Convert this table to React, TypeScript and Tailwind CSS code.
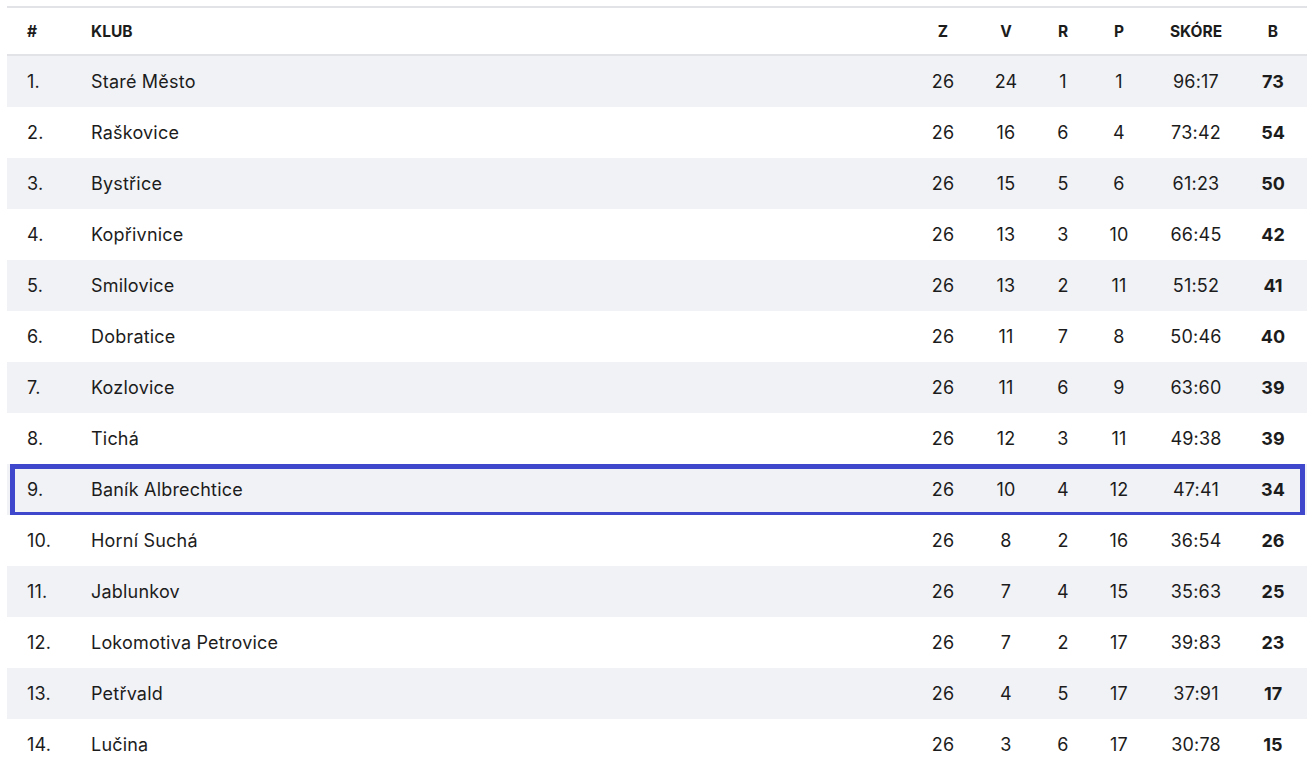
const rows: [string, number, number, number, number, string, number][] = [
  ['Staré Město', 26, 24, 1, 1, '96:17', 73],
  ['Raškovice', 26, 16, 6, 4, '73:42', 54],
  ['Bystřice', 26, 15, 5, 6, '61:23', 50],
  ['Kopřivnice', 26, 13, 3, 10, '66:45', 42],
  ['Smilovice', 26, 13, 2, 11, '51:52', 41],
  ['Dobratice', 26, 11, 7, 8, '50:46', 40],
  ['Kozlovice', 26, 11, 6, 9, '63:60', 39],
  ['Tichá', 26, 12, 3, 11, '49:38', 39],
  ['Baník Albrechtice', 26, 10, 4, 12, '47:41', 34],
  ['Horní Suchá', 26, 8, 2, 16, '36:54', 26],
  ['Jablunkov', 26, 7, 4, 15, '35:63', 25],
  ['Lokomotiva Petrovice', 26, 7, 2, 17, '39:83', 23],
  ['Petřvald', 26, 4, 5, 17, '37:91', 17],
  ['Lučina', 26, 3, 6, 17, '30:78', 15],
]

const cols = 'grid grid-cols-[84px_1fr_56px_70px_44px_68px_86px_68px] items-center'

export default function App() {
  return (
    <div className="min-h-screen bg-white pt-[6px] pl-[7px] font-['Inter',sans-serif] text-[#1c1c1c]">
      <div className="w-[1300px]">
        <div className={`${cols} h-[50px] border-y-2 border-[#e1e3e7] pt-[2px] text-[15.5px] font-bold uppercase`}>
          <div className="pl-5">#</div>
          <div>Klub</div>
          <div className="text-center">Z</div>
          <div className="text-center">V</div>
          <div className="text-center">R</div>
          <div className="text-center">P</div>
          <div className="text-center">Skóre</div>
          <div className="text-center">B</div>
        </div>
        {rows.map(([club, z, v, r, p, score, b], i) => (
          <div
            key={club}
            className={`${cols} relative h-[51px] text-[18px] tracking-[0.2px] ${i % 2 === 0 ? 'bg-[#f1f2f6]' : 'bg-white'}`}
          >
            {i === 8 && (
              <div className="pointer-events-none absolute left-[3px] right-[2px] top-0 h-[53px] border-[5px] border-[#3f47cc]" />
            )}
            <div className="pl-5">{i + 1}.</div>
            <div>{club}</div>
            <div className="text-center">{z}</div>
            <div className="text-center">{v}</div>
            <div className="text-center">{r}</div>
            <div className="text-center">{p}</div>
            <div className="text-center">{score}</div>
            <div className="text-center font-bold tracking-normal">{b}</div>
          </div>
        ))}
      </div>
    </div>
  )
}
